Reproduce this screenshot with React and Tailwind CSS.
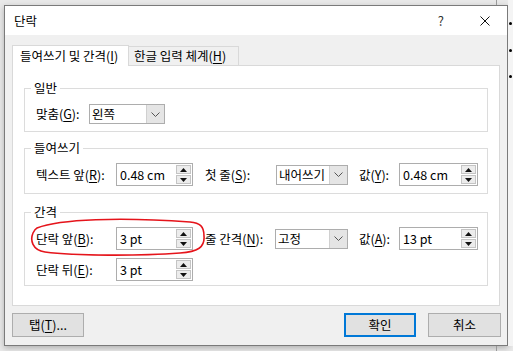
import React from 'react';

function Key({ ch }) {
  return <u className="underline underline-offset-[2px]">{ch}</u>;
}

function Spinner({ value, className }) {
  return (
    <div className={`flex h-[23px] border border-[#adadad] bg-white ${className}`}>
      <span className="flex-1 pl-[3px] leading-[21px]">{value}</span>
      <div className="flex w-[17px] flex-col gap-px p-px">
        <div className="flex flex-1 items-center justify-center border border-[#c4c4c4] bg-[#ececec]">
          <svg width="7" height="4" viewBox="0 0 7 4"><path d="M3.5 0 L7 4 L0 4 Z" fill="#111" /></svg>
        </div>
        <div className="flex flex-1 items-center justify-center border border-[#c4c4c4] bg-[#ececec]">
          <svg width="7" height="4" viewBox="0 0 7 4"><path d="M0 0 L7 0 L3.5 4 Z" fill="#111" /></svg>
        </div>
      </div>
    </div>
  );
}

function Combo({ value, className }) {
  return (
    <div className={`flex h-[20px] border border-[#adadad] bg-white ${className}`}>
      <span className="flex-1 overflow-hidden whitespace-nowrap pl-[2px] leading-[18px]">{value}</span>
      <div className="flex w-[18px] items-center justify-center border-l border-[#d0d0d0] bg-[#e5e5e5]">
        <svg width="9" height="5" viewBox="0 0 9 5"><path d="M0.5 0.5 L4.5 4.5 L8.5 0.5" fill="none" stroke="#555" strokeWidth="1" /></svg>
      </div>
    </div>
  );
}

function Group({ title, className, children }) {
  return (
    <fieldset className={`border border-[#dcdcdc] pl-[11px] ${className}`}>
      <legend className="ml-[-5px] px-[3px] leading-[16px]">{title}</legend>
      {children}
    </fieldset>
  );
}

function Button({ children, primary, className }) {
  return (
    <div
      className={`flex h-[24px] items-center justify-center bg-[#e1e1e1] ${
        primary ? 'border-2 border-[#0078d7]' : 'border border-[#adadad]'
      } ${className}`}
    >
      {children}
    </div>
  );
}

export default function App() {
  return (
    <div className="relative h-[351px] w-[513px] overflow-hidden bg-[#e9e9e9] pl-[4px] pt-[5px] font-['Noto_Sans_CJK_KR','Noto_Sans',sans-serif] text-[12.5px] text-black">
      <div className="flex h-[341px] w-[504px] flex-col border border-[#7a7a7a] bg-[#f0f0f0] shadow-[0_2px_6px_rgba(0,0,0,0.25)]">
        <div className="flex h-[29px] items-center bg-white pl-[9px]">
          <span className="leading-[16px]">단락</span>
          <span className="ml-auto mr-[36px] text-[13px] leading-[16px] text-[#333]">?</span>
          <svg className="mr-[17px]" width="10" height="10" viewBox="0 0 10 10">
            <path d="M0.5 0.5 L9.5 9.5 M9.5 0.5 L0.5 9.5" stroke="#111" strokeWidth="1" />
          </svg>
        </div>

        <div className="flex flex-col px-[7px] pt-[9px]">
          <div className="flex h-[21px] items-end">
            <div className="relative z-10 -mb-px h-[21px] w-[117px] whitespace-nowrap border border-b-0 border-[#d9d9d9] bg-white pl-[7px] leading-[19px]">
              들여쓰기 및 간격(<Key ch="I" />)
            </div>
            <div className="h-[19px] w-[110px] whitespace-nowrap border border-b-0 border-l-0 border-[#d9d9d9] bg-[#f0f0f0] pl-[5px] leading-[18px]">
              한글 입력 체계(<Key ch="H" />)
            </div>
          </div>

          <div className="flex h-[241px] w-[488px] flex-col border border-[#d9d9d9] bg-white px-[11px]">
            <Group title="일반" className="mt-[14px] pb-[7px] pt-[8px]">
              <div className="flex items-center">
                <span className="w-[53px] whitespace-nowrap leading-[16px]">맞춤(<Key ch="G" />):</span>
                <Combo value="왼쪽" className="w-[76px]" />
              </div>
            </Group>

            <Group title="들여쓰기" className="mt-[8px] pb-[7px] pt-[7px]">
              <div className="flex items-center">
                <span className="w-[80px] whitespace-nowrap leading-[16px]">텍스트 앞(<Key ch="R" />):</span>
                <Spinner value="0.48 cm" className="w-[77px]" />
                <span className="ml-[12px] w-[71px] whitespace-nowrap leading-[16px]">첫 줄(<Key ch="S" />):</span>
                <Combo value="내어쓰기" className="w-[72px]" />
                <span className="ml-[11px] w-[40px] whitespace-nowrap leading-[16px]">값(<Key ch="Y" />):</span>
                <Spinner value="0.48 cm" className="w-[79px]" />
              </div>
            </Group>

            <Group title="간격" className="mt-[10px] pb-[4px] pt-[7px]">
              <div className="flex flex-col gap-[8px]">
                <div className="flex items-center">
                  <span className="w-[80px] whitespace-nowrap leading-[16px]">단락 앞(<Key ch="B" />):</span>
                  <Spinner value="3 pt" className="w-[77px]" />
                  <span className="ml-[12px] w-[70px] whitespace-nowrap leading-[16px]">줄 간격(<Key ch="N" />):</span>
                  <Combo value="고정" className="w-[73px]" />
                  <span className="ml-[11px] w-[40px] whitespace-nowrap leading-[16px]">값(<Key ch="A" />):</span>
                  <Spinner value="13 pt" className="w-[79px]" />
                </div>
                <div className="flex items-center">
                  <span className="w-[80px] whitespace-nowrap leading-[16px]">단락 뒤(<Key ch="E" />):</span>
                  <Spinner value="3 pt" className="w-[77px]" />
                </div>
              </div>
            </Group>
          </div>

          <div className="mt-[7px] flex">
            <Button className="w-[72px]">
              탭(<Key ch="T" />)...
            </Button>
            <Button primary className="ml-auto w-[72px]">
              확인
            </Button>
            <Button className="ml-[12px] mr-[-1px] w-[73px]">취소</Button>
          </div>
        </div>
      </div>

      {/* slide content behind the dialog */}
      <div className="absolute right-0 top-0 h-[346px] w-[5px] bg-[#f4f4f4]" />
      <div className="absolute right-[1px] top-[22px] h-[3px] w-[3px] rounded-full bg-black" />
      <div className="absolute right-[1px] top-[49px] h-[3px] w-[3px] rounded-full bg-black" />
      <div className="absolute right-[1px] top-[75px] h-[3px] w-[3px] rounded-full bg-black" />
      <div className="absolute left-[496px] top-0 h-[5px] border-l border-dashed border-[#999]" />
      <div className="absolute left-[496px] top-[346px] h-[5px] border-l border-dashed border-[#999]" />

      {/* red hand-drawn annotation */}
      <svg className="pointer-events-none absolute left-0 top-0" width="513" height="351" viewBox="0 0 513 351">
        <path
          d="M37 228 C60 219 120 217 190 222 C200 223 204 226 204 236 C205 247 198 252 180 253 C140 256 75 256 45 252 C32 250 30 240 33 233 C34 231 35 229 37 228 Z"
          fill="none"
          stroke="#e5141b"
          strokeWidth="1.6"
        />
      </svg>
    </div>
  );
}
